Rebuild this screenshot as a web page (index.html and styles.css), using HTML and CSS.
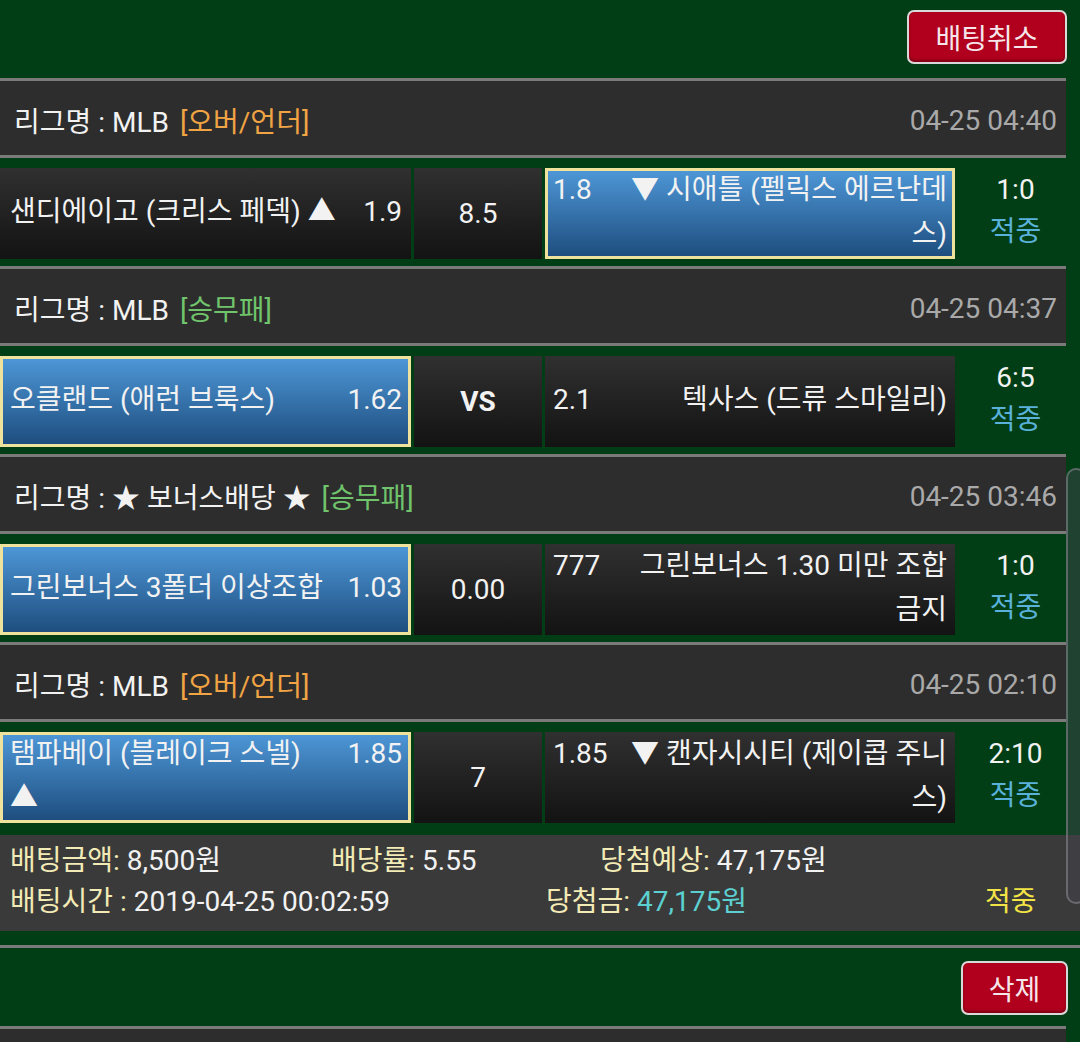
FILE: index.html
```html
<!DOCTYPE html>
<html lang="ko">
<head>
  <meta charset="UTF-8">
  <title>배팅내역</title>
  <link rel="stylesheet" href="styles.css">
</head>
<body>
  <div class="page">
    <div class="top-bar">
      <button class="btn-red">배팅취소</button>
    </div>

    <div class="game">
      <div class="league">
        <span>리그명 : MLB <span class="type over">[오버/언더]</span></span>
        <span class="time">04-25 04:40</span>
      </div>
      <div class="bet-row">
        <div class="cell home"><div class="inner"><span class="odds">1.9</span>샌디에이고 (크리스 페덱) ▲</div></div>
        <div class="cell mid">8.5</div>
        <div class="cell away picked"><div class="inner"><span class="odds">1.8</span>▼ 시애틀 (펠릭스 에르난데스)</div></div>
        <div class="result"><div>1:0</div><div class="hit">적중</div></div>
      </div>
    </div>

    <div class="game">
      <div class="league">
        <span>리그명 : MLB <span class="type win">[승무패]</span></span>
        <span class="time">04-25 04:37</span>
      </div>
      <div class="bet-row">
        <div class="cell home picked"><div class="inner"><span class="odds">1.62</span>오클랜드 (애런 브룩스)</div></div>
        <div class="cell mid vs">VS</div>
        <div class="cell away"><div class="inner"><span class="odds">2.1</span>텍사스 (드류 스마일리)</div></div>
        <div class="result"><div>6:5</div><div class="hit">적중</div></div>
      </div>
    </div>

    <div class="game">
      <div class="league">
        <span>리그명 : ★ 보너스배당 ★ <span class="type win">[승무패]</span></span>
        <span class="time">04-25 03:46</span>
      </div>
      <div class="bet-row">
        <div class="cell home picked"><div class="inner"><span class="odds">1.03</span>그린보너스 3폴더 이상조합</div></div>
        <div class="cell mid">0.00</div>
        <div class="cell away"><div class="inner"><span class="odds">777</span>그린보너스 1.30 미만 조합 금지</div></div>
        <div class="result"><div>1:0</div><div class="hit">적중</div></div>
      </div>
    </div>

    <div class="game last">
      <div class="league">
        <span>리그명 : MLB <span class="type over">[오버/언더]</span></span>
        <span class="time">04-25 02:10</span>
      </div>
      <div class="bet-row">
        <div class="cell home picked"><div class="inner"><span class="odds">1.85</span>탬파베이 (블레이크 스넬) ▲</div></div>
        <div class="cell mid">7</div>
        <div class="cell away"><div class="inner"><span class="odds">1.85</span>▼ 캔자시시티 (제이콥 주니스)</div></div>
        <div class="result"><div>2:10</div><div class="hit">적중</div></div>
      </div>
    </div>

    <div class="summary">
      <div class="sum-line">
        <span class="s-amount"><span class="lbl">배팅금액:</span> 8,500원</span>
        <span class="s-rate"><span class="lbl">배당률:</span> 5.55</span>
        <span><span class="lbl">당첨예상:</span> 47,175원</span>
      </div>
      <div class="sum-line">
        <span class="s-time"><span class="lbl">배팅시간 :</span> 2019-04-25 00:02:59</span>
        <span class="s-win"><span class="lbl">당첨금:</span> <span class="money">47,175원</span></span>
        <span class="s-status">적중</span>
      </div>
    </div>

    <div class="bottom-bar">
      <button class="btn-red small">삭제</button>
    </div>
    <div class="next-game"></div>

    <div class="scroll-thumb"></div>
  </div>
</body>
</html>
```

FILE: styles.css
```css
body {
  margin: 0;
  background: #013e16;
  font-family: Roboto, "Noto Sans CJK KR", sans-serif;
  font-size: 28px;
  color: #f2f2f2;
}

.page {
  position: relative;
  width: 1080px;
  height: 1042px;
  overflow: hidden;
}

.top-bar {
  height: 78px;
  display: flex;
  justify-content: flex-end;
  align-items: flex-start;
  padding-right: 13px;
  box-sizing: border-box;
}

.btn-red {
  margin-top: 10px;
  width: 160px;
  height: 54px;
  background: #b1001d;
  color: #f6e6ea;
  font-family: inherit;
  font-size: 28px;
  border: 2px solid #d9d9d9;
  border-radius: 7px;
  box-shadow: inset 0 -2px 3px rgba(0,0,0,0.3);
  padding: 0;
}

.btn-red.small {
  width: 107px;
  margin-top: 13px;
}

.game {
  width: 1066px;
  border-top: 3px solid #7a7a7a;
  padding-bottom: 7px;
}

.game.last {
  padding-bottom: 12px;
}

.league {
  height: 77px;
  background: #2d2d2d;
  border-bottom: 3px solid #7a7a7a;
  display: flex;
  justify-content: space-between;
  align-items: center;
  padding: 4px 9px 0 14px;
  box-sizing: border-box;
  margin-bottom: 10px;
}

.type {
  margin-left: 4px;
}

.type.over { color: #f0a444; }
.type.win { color: #70c46c; }

.time {
  color: #a9a9a9;
}

.bet-row {
  display: flex;
  height: 91px;
}

.cell {
  display: flex;
  align-items: center;
  background: linear-gradient(to bottom, #303030, #131313);
  line-height: 44px;
  box-sizing: border-box;
}

.cell.home {
  width: 411px;
  padding: 0 9px 3px 10px;
}

.cell.home.picked {
  padding: 0 6px 3px 7px;
}

.cell.mid {
  width: 128px;
  margin: 0 3px;
  justify-content: center;
}

.cell.vs {
  font-weight: bold;
}

.cell.away {
  width: 410px;
  padding: 0 8px 3px 8px;
}

.cell.away.picked {
  padding: 0 5px 3px 5px;
}

.cell.picked {
  background: linear-gradient(to bottom, #4d96d6, #1e4e7f);
  border: 3px solid #eee29c;
}

.inner {
  width: 100%;
}

.home .odds {
  float: right;
  margin-left: 20px;
}

.away .inner {
  text-align: right;
}

.away .odds {
  float: left;
  margin-right: 20px;
}

.result {
  flex: 1;
  display: flex;
  flex-direction: column;
  justify-content: center;
  align-items: center;
  padding: 0 0 6px 10px;
  line-height: 42px;
}

.hit {
  color: #5ab2da;
}

.summary {
  background: #3a3a3a;
  padding: 5px 10px 9px;
  line-height: 41px;
}

.sum-line {
  display: flex;
}

.lbl {
  color: #f3ebb6;
}

.s-amount { width: 321px; }
.s-rate { width: 269px; }
.s-time { width: 536px; }
.s-win { width: 439px; }

.s-status {
  color: #f2e446;
}

.money {
  color: #5ccfd0;
}

.bottom-bar {
  margin-top: 14px;
  border-top: 3px solid #7a7a7a;
  height: 81px;
  width: 1080px;
  display: flex;
  justify-content: flex-end;
  align-items: flex-start;
  padding-right: 12px;
  box-sizing: border-box;
}

.next-game {
  width: 1066px;
  border-top: 3px solid #7a7a7a;
  height: 20px;
  background: #2d2d2d;
}

.scroll-thumb {
  position: absolute;
  right: -6px;
  top: 468px;
  width: 16px;
  height: 432px;
  border: 2px solid rgba(140,140,150,0.55);
  border-radius: 10px;
  background: rgba(70,70,80,0.45);
}
```
